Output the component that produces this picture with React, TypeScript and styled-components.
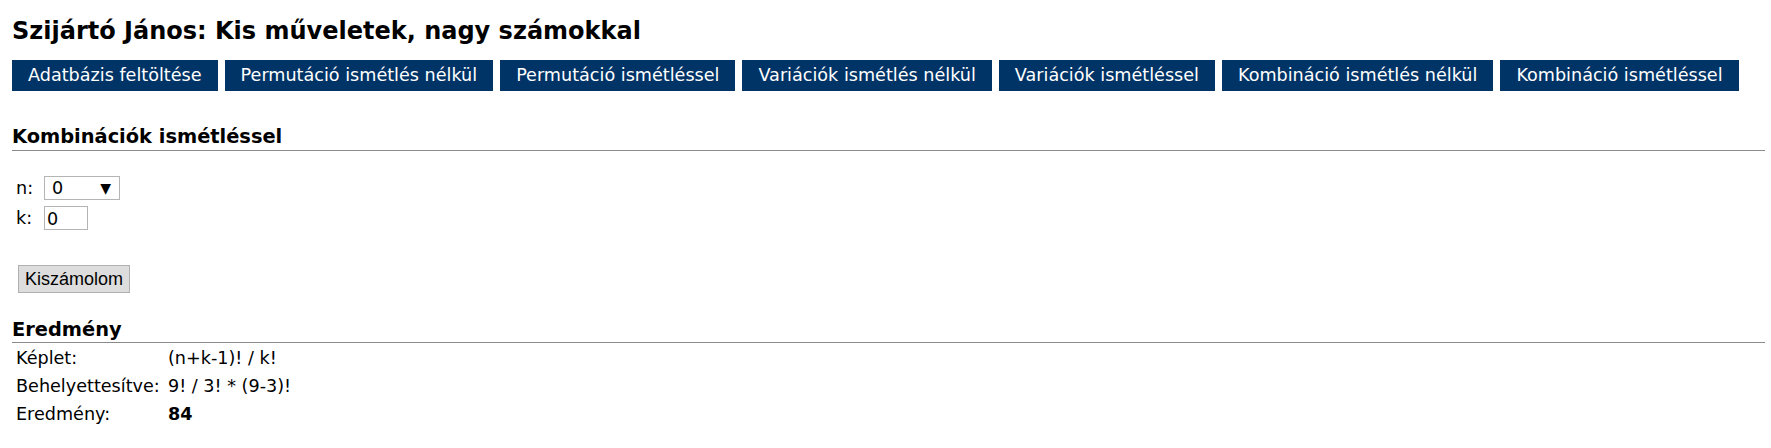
import React from "react";
import styled, { createGlobalStyle } from "styled-components";

const GlobalStyle = createGlobalStyle`
  html, body {
    margin: 0;
    padding: 0;
    background: #ffffff;
    color: #000000;
    font-family: "DejaVu Sans", Verdana, sans-serif;
  }
`;

const Page = styled.div`
  padding: 0 6px 0 12px;
  display: flex;
  flex-direction: column;
`;

const Title = styled.h1`
  margin: 17px 0 0 0;
  font-size: 24px;
  line-height: 28px;
  font-weight: bold;
`;

const Menu = styled.nav`
  display: flex;
  gap: 7px;
  margin-top: 15px;
`;

const MenuButton = styled.a`
  display: block;
  background: #003366;
  color: #ffffff;
  font-size: 17.6px;
  line-height: 21px;
  padding: 5px 16px;
  text-decoration: none;
  white-space: nowrap;
`;

const SectionHeading = styled.h2<{ $top: number; $pad: number }>`
  margin: ${(p) => p.$top}px 0 0 0;
  font-size: 19.4px;
  line-height: 22px;
  font-weight: bold;
  padding-bottom: ${(p) => p.$pad}px;
  border-bottom: 1px solid #8a8a8a;
`;

const Form = styled.div`
  display: grid;
  grid-template-columns: 28px auto;
  row-gap: 6px;
  align-items: center;
  margin-top: 25px;
  padding-left: 4px;
  justify-content: start;
`;

const Label = styled.span`
  font-size: 17.6px;
  line-height: 24px;
`;

const SelectBox = styled.div`
  box-sizing: border-box;
  width: 76px;
  height: 24px;
  border: 1px solid #b4b4b4;
  display: flex;
  align-items: center;
  justify-content: space-between;
  padding: 0 8px 0 7px;
  font-size: 17.6px;
`;

const Arrow = styled.span`
  font-size: 14px;
  line-height: 1;
`;

const NumberInput = styled.input`
  box-sizing: border-box;
  width: 44px;
  height: 24px;
  border: 1px solid #b4b4b4;
  padding: 2px 0 0 2px;
  margin: 0;
  font-family: "DejaVu Sans", Verdana, sans-serif;
  font-size: 17.6px;
  color: #000;
  outline: none;
`;

const SubmitRow = styled.div`
  display: flex;
  margin-top: 35px;
  padding-left: 6px;
`;

const SubmitButton = styled.button`
  box-sizing: border-box;
  height: 28px;
  background: #dddddd;
  border: 1px solid #b0b0b0;
  border-radius: 0;
  padding: 0 6px;
  margin: 0;
  font-family: "Liberation Sans", Arial, sans-serif;
  font-size: 18px;
  color: #000;
`;

const ResultTable = styled.div`
  display: grid;
  grid-template-columns: 152px auto;
  justify-content: start;
  padding: 1px 0 0 4px;
  font-size: 17.6px;
  line-height: 28px;
`;

const Cell = styled.span<{ $bold?: boolean }>`
  white-space: nowrap;
  font-weight: ${(p) => (p.$bold ? "bold" : "normal")};
`;

const menuItems = [
  "Adatbázis feltöltése",
  "Permutáció ismétlés nélkül",
  "Permutáció ismétléssel",
  "Variációk ismétlés nélkül",
  "Variációk ismétléssel",
  "Kombináció ismétlés nélkül",
  "Kombináció ismétléssel",
];

export default function App() {
  return (
    <>
      <GlobalStyle />
      <Page>
        <Title>Szijártó János: Kis műveletek, nagy számokkal</Title>
        <Menu>
          {menuItems.map((m) => (
            <MenuButton key={m} href="#">
              {m}
            </MenuButton>
          ))}
        </Menu>
        <SectionHeading $top={35} $pad={2}>
          Kombinációk ismétléssel
        </SectionHeading>
        <Form>
          <Label>n:</Label>
          <SelectBox>
            <span>0</span>
            <Arrow>▼</Arrow>
          </SelectBox>
          <Label>k:</Label>
          <NumberInput defaultValue="0" />
        </Form>
        <SubmitRow>
          <SubmitButton>Kiszámolom</SubmitButton>
        </SubmitRow>
        <SectionHeading $top={26} $pad={1}>
          Eredmény
        </SectionHeading>
        <ResultTable>
          <Cell>Képlet:</Cell>
          <Cell>(n+k-1)! / k!</Cell>
          <Cell>Behelyettesítve:</Cell>
          <Cell>9! / 3! * (9-3)!</Cell>
          <Cell>Eredmény:</Cell>
          <Cell $bold>84</Cell>
        </ResultTable>
      </Page>
    </>
  );
}
